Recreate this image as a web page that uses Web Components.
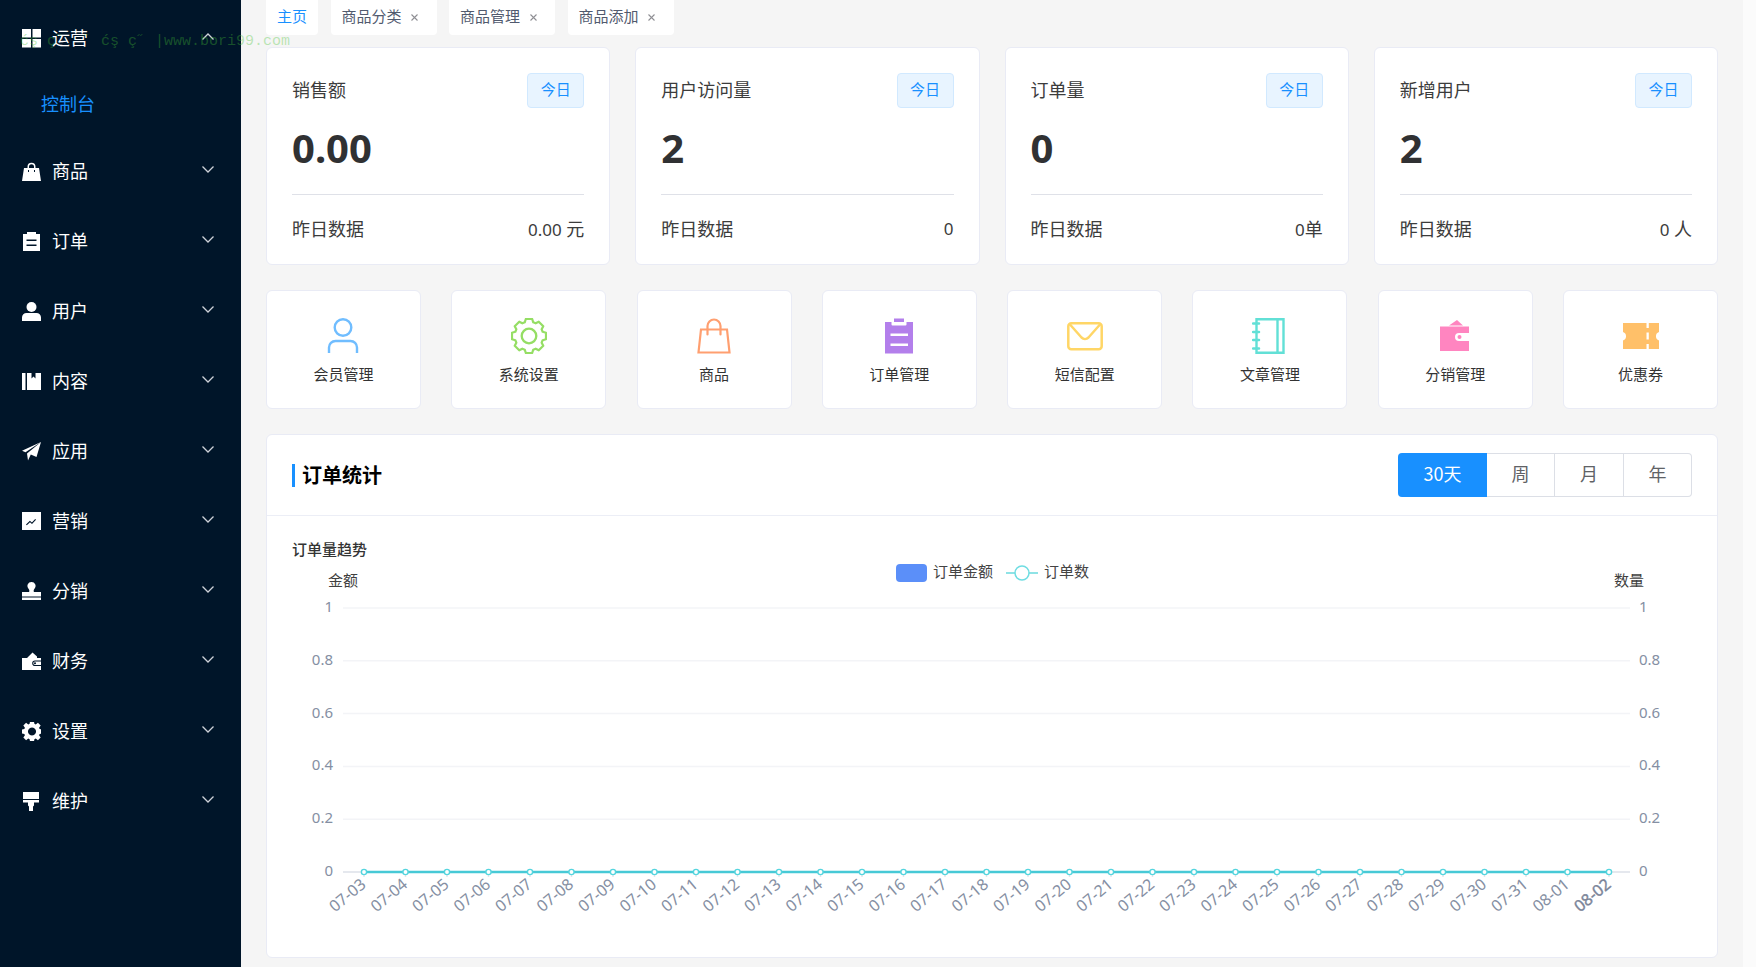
<!DOCTYPE html>
<html lang="zh"><head><meta charset="utf-8"><title>控制台</title>
<style>
html,body{margin:0;height:100%;overflow:hidden;background:#f5f5f5}
body{font-family:"Noto Sans CJK SC","Noto Sans",sans-serif}
</style></head><body>
<admin-app></admin-app>
<script>
function el(name, css, html){
  customElements.define(name, class extends HTMLElement{
    constructor(){super();const r=this.attachShadow({mode:'open'});
      const h=typeof html==='function'?html(this):html;
      r.innerHTML='<style>'+css+'</style>'+h;}
  });
}
function gear(cx,cy,ro,ri,n,flat){
  const pts=[];const st=Math.PI*2/n;
  for(let i=0;i<n;i++){const a=i*st-Math.PI/2;
    const w=st*flat;
    [[a-w*.62,ri],[a-w*.38,ro],[a+w*.38,ro],[a+w*.62,ri]].forEach(([t,r])=>pts.push((cx+r*Math.cos(t)).toFixed(2)+' '+(cy+r*Math.sin(t)).toFixed(2)));
  }
  return 'M'+pts.join('L')+'Z';
}
const ICONS={
 grid:'<path d="M0 0h9v8.500H0zM10.500 0H19v8.500h-8.500zM0 10h9v8.500H0zM10.500 10H19v8.500h-8.500z"/>',
 bag:'<path fill-rule="evenodd" d="M2 6h3.500V4.800a4 4 0 0 1 8 0V6H17l2 13H0zM7 6h5V4.800a2.500 2.500 0 0 0-5 0zM6 8v2h1V8zM12 8v2h1V8z"/>',
 clip:'<path fill-rule="evenodd" d="M1 2h4V0h9v2h4v17H1zM4.500 7.500v1.500h10V7.500zM4.500 12.500V14h10v-1.500z"/>',
 user:'<circle cx="9.500" cy="5" r="5"/><path d="M0 19v-3.500a4.500 4.500 0 0 1 4.500-4.500h10a4.500 4.500 0 0 1 4.500 4.500V19z"/>',
 book:'<path d="M0 1h3.500v17H0zM5 1h4.500v5.500l2-2 2 2V1H19v17H5z"/>',
 plane:'<path d="M19 0 14.500 15 8.800 12.500 6 18.500 5 11.500zM19 0 3.500 10.300 0 8.700z"/>',
 chart:'<path fill-rule="evenodd" d="M0 0h19v18H0zM4 12.500l.8.800 3.200-3 2 1.700 4-4.300-.8-.7-3.300 3.500-2-1.700z"/>',
 stamp:'<path d="M9.500 0a4 4 0 0 1 3 6.700c-1 1.300-1 2.300-.6 3.300H19v4.500H0V10h7.100c.4-1 .4-2-.6-3.300a4 4 0 0 1 3-6.700zM0 15.500h19V18H0z"/>',
 wallet:'<path fill-rule="evenodd" d="M0 6h5L10.500.5 15 4.500V6H19v2.500h-6a2.800 2.800 0 0 0 0 5.600h6V18H0zM13 9.500h6v3.500h-6a1.750 1.750 0 0 1 0-3.500z"/><circle cx="13" cy="11.250" r="1" fill="#001529"/>',
 brush:'<path d="M1 0h16v7H1zM1 8h16v2.500h-5v3l-1 1v4.500H7V14.500l-1-1v-3H1z"/>'
};
ICONS.gear='<path fill-rule="evenodd" d="'+gear(10,9.500,10.500,8,8,.62)+'M10 5.500a4 4 0 1 0 .01 0z"/>';

el('side-item',`
:host{display:block}
.row{height:70px;display:flex;align-items:center;padding-left:22px;padding-right:27px;color:#fff;font-size:18px}
svg.i{width:19px;height:19px;fill:#fff;flex:none;margin-right:11px}
.t{flex:1;position:relative;top:-1px}
svg.c{width:12px;height:7px;fill:none;stroke:#cfd3da;stroke-width:1.300;position:relative;top:-2px}
`,t=>{
  const open=t.hasAttribute('open');
  return `<div class="row"><svg class="i" viewBox="0 0 19 19">${ICONS[t.getAttribute('icon')]}</svg><span class="t">${t.getAttribute('label')}</span><svg class="c" viewBox="0 0 12 7"><path d="${open?'M.5 6.500 6 1l5.500 5.500':'M.5.500 6 6 11.500.500'}"/></svg></div><slot></slot>`;
});
el('side-sub',`:host{display:flex;align-items:center;height:63px;padding-left:41px;color:#1890ff;font-size:18px}span{position:relative;top:-2px}`,'<span><slot></slot></span>');
el('admin-sidebar',`:host{display:block;width:241px;flex:none;background:#001529;padding-top:3px;box-sizing:border-box;overflow:hidden}`,'<slot></slot>');

el('tab-chip',`
:host{display:flex;align-items:center;height:35px;background:#fff;border-radius:0 0 4px 4px;padding:0 11px;font-size:15px;color:#515a6e;box-sizing:border-box}
:host([active]){color:#1890ff}
span{position:relative;top:-2px}
svg{width:7px;height:7px;stroke:#8f8f94;stroke-width:1.100;margin-left:9.500px;margin-right:7.500px}
`,t=>`<span><slot></slot></span>`+(t.hasAttribute('active')?'':'<svg viewBox="0 0 7 7"><path d="M.5.500l6 6M6.500.500l-6 6"/></svg>'));
el('tab-bar',`:host{display:flex;gap:12.500px;height:35px}`,'<slot></slot>');

el('stat-card',`
:host{display:flex;flex-direction:column;background:#fff;border:1px solid #e9ebf5;border-radius:6px;box-sizing:border-box;height:218px;padding:0 25px;color:#303133}
.top{display:flex;justify-content:space-between;align-items:center;margin-top:25px;height:35px;font-size:18px;color:#3c3c3c}
.top>span:first-child{position:relative;top:-2px}
.tag{width:57px;height:35px;box-sizing:border-box;border:1px solid #d1e9ff;border-radius:4px;background:#e8f4ff;color:#1890ff;font-size:15px;display:flex;align-items:center;justify-content:center}
.tag i{font-style:normal;position:relative;top:-2px}
.num{font:700 40px/50px "Noto Sans",sans-serif;margin-top:15px;height:71px;color:#303133}
.bot{border-top:1px solid #dfe1e8;flex:1;display:flex;justify-content:space-between;align-items:center;font-size:18px;color:#3c3c3c;padding-bottom:3px}
.v{font-size:17px;font-family:"Noto Sans","Noto Sans CJK SC",sans-serif}
.v b{font:400 18px "Noto Sans CJK SC",sans-serif}
`,t=>`<div class="top"><span>${t.getAttribute('label')}</span><span class="tag"><i>今日</i></span></div>
<div class="num">${t.getAttribute('value')}</div>
<div class="bot"><span>昨日数据</span><span class="v">${t.getAttribute('prev').replace(/[元单人]/,'<b>$&</b>')}</span></div>`);

const QI={
 person:['#70bdff','<circle cx="18" cy="9.500" r="8.300" fill="none" stroke="currentColor" stroke-width="2.400"/><path d="M4 35v-5.500a6.500 6.500 0 0 1 6.500-6.500h15a6.500 6.500 0 0 1 6.500 6.500V35" fill="none" stroke="currentColor" stroke-width="2.400"/>'],
 gear:['#95de64','<path d="'+gear(18,18,17.300,14.300,8,.62)+'" fill="none" stroke="currentColor" stroke-width="2.200" stroke-linejoin="round"/><circle cx="18" cy="18" r="7.300" fill="none" stroke="currentColor" stroke-width="2.300"/>'],
 bag:['#ff9f70','<path d="M5 11.500h26L33.500 34.500h-31z" fill="none" stroke="currentColor" stroke-width="2.200"/><path d="M11.500 16.500V8a6.500 6.500 0 0 1 13 0v8.500" fill="none" stroke="currentColor" stroke-width="2.200" stroke-linecap="round"/>'],
 clip:['#b37feb','<path d="M13 .5h10v3.500H13zM4 4h6.500v2.500a1 1 0 0 0 1 1h13a1 1 0 0 0 1-1V4H32v31.500H4zM9.500 15.500v2.500H27v-2.500zM9.500 25.500V28H27v-2.500z" fill="currentColor" fill-rule="evenodd"/>'],
 mail:['#ffd666','<rect x="1.300" y="5.300" width="33.400" height="26" rx="3" fill="none" stroke="currentColor" stroke-width="2.500"/><path d="M3 6.500l11.500 13a5 5 0 0 0 7 0L33 6.500" fill="none" stroke="currentColor" stroke-width="2.500"/>'],
 note:['#62e0d6','<path d="M4.500 1.300h27v33.400h-27zM25.500 1.300v33.400" fill="none" stroke="currentColor" stroke-width="2.400"/><path d="M1 5.500h6M1 14h6M1 22h6M1 30.500h6" stroke="currentColor" stroke-width="2.500" stroke-linecap="round"/>'],
 wallet:['#ff85c0','<path d="M12 7.500l8-5.500 6 5.500zM3 8.500h29v6.500H22a4 4 0 0 0 0 8h10v10H3z" fill="currentColor"/><circle cx="22.500" cy="19" r="2" fill="currentColor"/>'],
 ticket:['#ffc069','<path d="M0 5h23.500v5h2.300V5H36v9a4.500 4.500 0 0 0 0 8.500V31H25.800v-5h-2.300v5H0v-8.500a4.500 4.500 0 0 0 0-8.500zM23.500 14.500v7h2.300v-7z" fill="currentColor" fill-rule="evenodd"/>']
};
el('quick-link',`
:host{display:flex;flex-direction:column;align-items:center;background:#fff;border:1px solid #e9ebf5;border-radius:6px;box-sizing:border-box;height:119px;font-size:15px;color:#333}
svg{width:36px;height:36px;margin-top:27px;flex:none}
span{margin-top:9px;line-height:22px}
`,t=>{const q=QI[t.getAttribute('icon')];return `<svg viewBox="0 0 36 36" style="color:${q[0]}">${q[1]}</svg><span><slot></slot></span>`});

el('range-toggle',`
:host{display:flex;height:44px;font-size:18px;color:#606266}
button{all:unset;box-sizing:border-box;display:flex;align-items:center;justify-content:center;height:44px;border:1px solid #dcdfe6;border-left:0;background:#fff;font:inherit;color:inherit}
.a{width:89px;background:#1890ff;color:#fff;border:0;border-radius:4px 0 0 4px}
.b{width:68px}.c{width:69px}
.d{width:68px;border-radius:0 4px 4px 0}
span{position:relative;top:-2px}
`,'<button class="a"><span>30天</span></button><button class="b"><span>周</span></button><button class="c"><span>月</span></button><button class="d"><span>年</span></button>');

el('order-chart',`:host{display:block;height:440px}svg{display:block;width:1450px;height:440px;overflow:visible}
text{font-family:"Noto Sans","Noto Sans CJK SC",sans-serif;font-size:15px;fill:#858fa3}
.x{font-size:16px}
.k{font-family:"Noto Sans CJK SC",sans-serif;fill:#3f3f3f}
.h{font-family:"Noto Sans CJK SC",sans-serif;fill:#333;font-weight:500}
`,()=>{
  const ox=267, oy=516;
  let s='';
  const X=x=>x-ox, Y=y=>y-oy;
  s+=`<text class="h" x="${X(292)}" y="${Y(554.500)}">订单量趋势</text>`;
  s+=`<text class="k" x="${X(328)}" y="${Y(586)}">金额</text><text class="k" x="${X(1614)}" y="${Y(586)}">数量</text>`;
  s+=`<rect x="${X(896)}" y="${Y(564)}" width="31" height="18" rx="4" fill="#5b8ff9"/><text class="k" x="${X(933)}" y="${Y(576.500)}" style="fill:#444">订单金额</text>`;
  s+=`<path d="M${X(1006)} ${Y(573)}h32" stroke="#8fe3e6" stroke-width="2"/><circle cx="${X(1022)}" cy="${Y(573)}" r="7" fill="#fff" stroke="#6fdde2" stroke-width="1.500"/><text class="k" x="${X(1044)}" y="${Y(576.500)}" style="fill:#444">订单数</text>`;
  const lab=['0','0.2','0.4','0.6','0.8','1'];
  for(let i=0;i<6;i++){const y=Y(872-i*52.8);
    if(i>0)s+=`<path d="M${X(343)} ${y}H${X(1630)}" stroke="#f3f4f7" stroke-width="1.500"/>`;
    s+=`<text x="${X(333)}" y="${y+4}" text-anchor="end">${lab[i]}</text><text x="${X(1639)}" y="${y+4}">${lab[i]}</text>`;
  }
  s+=`<path d="M${X(343)} ${Y(872)}H${X(1630)}" stroke="#dde0e8" stroke-width="1.500"/>`;
  const days=[];
  for(let d=3;d<=31;d++)days.push('07-'+String(d).padStart(2,'0'));
  days.push('08-01','08-02');
  const step=41.5, x0=364;
  let pts='';
  days.forEach((d,i)=>{const x=X(x0+i*step),y=Y(872);
    s+=`<path d="M${x} ${y}v5" stroke="#e3e6ec" stroke-width="1.500"/>`;
    const tx=x+3,ty=y+14;
    s+=`<text class="x" x="${tx}" y="${ty}" text-anchor="end" transform="rotate(-40 ${tx} ${ty})"${i==30?' style="fill:#7b8599;stroke:#7b8599;stroke-width:.4"':''}>${d}</text>`;
    pts+=`<circle cx="${x}" cy="${y}" r="2.600" fill="#fff" stroke="#55d5de" stroke-width="1.400"/>`;
  });
  s+=`<path d="M${X(x0)} ${Y(872)}H${X(x0+30*step)}" stroke="#47c9d6" stroke-width="2.500"/>`+pts;
  return `<svg viewBox="0 0 1450 440">${s}</svg>`;
});

el('chart-card',`
:host{display:block;background:#fff;border:1px solid #e9ebf5;border-radius:6px;box-sizing:border-box;height:524px;overflow:hidden}
header{height:81px;border-bottom:1.500px solid #eceef6;display:flex;align-items:center;justify-content:space-between;padding:0 25px;box-sizing:border-box}
h2{margin:0;font-size:20px;font-weight:700;line-height:23px;color:#000;border-left:3px solid #1890ff;padding-left:7px}
h2 span{position:relative;top:-1px}
`,'<header><h2><span>订单统计</span></h2><range-toggle></range-toggle></header><order-chart></order-chart>');

el('admin-main',`
:host{display:flex;flex-direction:column;flex:1;min-width:0;padding:0 25px;box-sizing:border-box}
.stats{display:grid;grid-template-columns:repeat(4,1fr);gap:25px;margin-top:12px}
.links{display:grid;grid-template-columns:repeat(8,1fr);column-gap:30.300px;margin-top:25px}
chart-card{margin-top:25px}
`,`<tab-bar><tab-chip active>主页</tab-chip><tab-chip>商品分类</tab-chip><tab-chip>商品管理</tab-chip><tab-chip>商品添加</tab-chip></tab-bar>
<div class="stats">
<stat-card label="销售额" value="0.00" prev="0.00 元"></stat-card>
<stat-card label="用户访问量" value="2" prev="0"></stat-card>
<stat-card label="订单量" value="0" prev="0单"></stat-card>
<stat-card label="新增用户" value="2" prev="0 人"></stat-card>
</div>
<div class="links">
<quick-link icon="person">会员管理</quick-link><quick-link icon="gear">系统设置</quick-link><quick-link icon="bag">商品</quick-link><quick-link icon="clip">订单管理</quick-link><quick-link icon="mail">短信配置</quick-link><quick-link icon="note">文章管理</quick-link><quick-link icon="wallet">分销管理</quick-link><quick-link icon="ticket">优惠券</quick-link>
</div>
<chart-card></chart-card>`);

el('water-mark',`:host{position:absolute;left:20px;top:32px;font:15px/20px "Liberation Mono",monospace;color:rgba(70,195,50,.35);white-space:pre;pointer-events:none}`,'<slot></slot>');

el('admin-app',`
:host{display:flex;height:967px;width:1756px;position:relative;background:#f5f5f5;overflow:hidden}
.gutter{width:13px;flex:none;background:#fbfbfb}
`,`<admin-sidebar>
<side-item icon="grid" label="运营" open><side-sub>控制台</side-sub></side-item>
<side-item icon="bag" label="商品"></side-item>
<side-item icon="clip" label="订单"></side-item>
<side-item icon="user" label="用户"></side-item>
<side-item icon="book" label="内容"></side-item>
<side-item icon="plane" label="应用"></side-item>
<side-item icon="chart" label="营销"></side-item>
<side-item icon="stamp" label="分销"></side-item>
<side-item icon="wallet" label="财务"></side-item>
<side-item icon="gear" label="设置"></side-item>
<side-item icon="brush" label="维护"></side-item>
</admin-sidebar><admin-main></admin-main><div class="gutter"></div><water-mark>ćş ç˝  ˝ ćş ç˝ |www.bori99.com</water-mark>`);
</script></body></html>
